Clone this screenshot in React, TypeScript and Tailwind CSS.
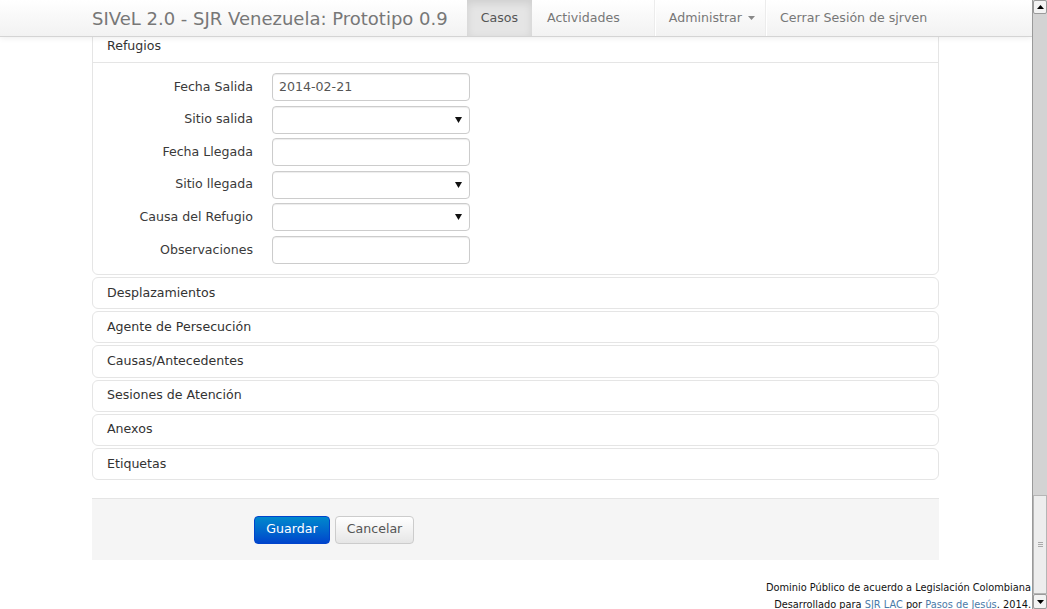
import React from "react";

const font = { fontFamily: '"DejaVu Sans", sans-serif' };

function Field({ label, value, select }: { label: string; value?: string; select?: boolean }) {
  return (
    <div className="flex items-center h-[28px]">
      <div className="w-[160px] text-right text-[12.6px] text-[#3a3a3a]">{label}</div>
      <div className="ml-[19px] w-[198px] h-[28px] border border-[#cccccc] rounded-[4px] bg-white flex items-center px-[6px] text-[12.6px] text-[#555] shadow-[inset_0_1px_1px_rgba(0,0,0,0.075)]">
        <span className="flex-1">{value}</span>
        {select && (
          <svg width="7" height="6" viewBox="0 0 7 6" className="mr-[1px]">
            <path d="M0 0 L7 0 L3.5 6 Z" fill="#111" />
          </svg>
        )}
      </div>
    </div>
  );
}

function Item({ title }: { title: string }) {
  return (
    <div className="h-[32.2px] border border-[#e5e5e5] rounded-[6px] flex items-center pl-[14px] text-[12.6px] text-[#333]">
      {title}
    </div>
  );
}

export default function App() {
  return (
    <div className="w-[1047px] h-[609px] overflow-hidden flex bg-white" style={font}>
      <div className="relative flex-1 h-full overflow-hidden">
        <div className="absolute top-0 left-0 right-0 h-[37px] z-10 bg-gradient-to-b from-white to-[#f2f2f2] border-b border-[#d4d4d4] shadow-[0_1px_6px_rgba(0,0,0,0.08)] flex">
          <div className="ml-[92px] flex items-center h-full text-[18px] text-[#777] pr-[19px]">
            SIVeL 2.0 - SJR Venezuela: Prototipo 0.9
          </div>
          <div className="flex h-full text-[12.6px] text-[#777]">
            <div className="px-[14px] flex items-center bg-[#e5e5e5] text-[#555] shadow-[inset_0_3px_8px_rgba(0,0,0,0.1)]">Casos</div>
            <div className="px-[15px] flex items-center">Actividades</div>
            <div className="ml-[19px] h-full border-l border-[#ececec] border-r border-r-white" />
            <div className="pl-[13px] pr-[10px] flex items-center gap-[6px]">
              Administrar
              <svg width="7" height="4" viewBox="0 0 7 4"><path d="M0 0 L7 0 L3.5 4 Z" fill="#888" /></svg>
            </div>
            <div className="h-full border-l border-[#ececec] border-r border-r-white" />
            <div className="px-[13px] flex items-center">Cerrar Sesión de sjrven</div>
          </div>
        </div>

        <div className="pt-[29px] ml-[92px] w-[847px]">
          <div className="border border-[#e5e5e5] rounded-[6px]">
            <div className="h-[33px] border-b border-[#e5e5e5] flex items-center pl-[14px] text-[12.6px] text-[#333]">Refugios</div>
            <div className="pt-[10px] pb-[10px] flex flex-col gap-[4.6px]">
              <Field label="Fecha Salida" value="2014-02-21" />
              <Field label="Sitio salida" select />
              <Field label="Fecha Llegada" />
              <Field label="Sitio llegada" select />
              <Field label="Causa del Refugio" select />
              <Field label="Observaciones" />
            </div>
          </div>
          <div className="mt-[2px] flex flex-col gap-[2px]">
            <Item title="Desplazamientos" />
            <Item title="Agente de Persecución" />
            <Item title="Causas/Antecedentes" />
            <Item title="Sesiones de Atención" />
            <Item title="Anexos" />
            <Item title="Etiquetas" />
          </div>
          <div className="mt-[18px] h-[62px] border-t border-[#e5e5e5] bg-[#f5f5f5] flex items-center pl-[162px] gap-[5px]">
            <button className="w-[76px] h-[28px] rounded-[4px] border border-[#0044cc] bg-gradient-to-b from-[#0088cc] to-[#0044cc] text-white text-[12.6px]">Guardar</button>
            <button className="w-[79px] h-[28px] rounded-[4px] border border-[#cccccc] bg-gradient-to-b from-white to-[#e6e6e6] text-[#555] text-[12.6px]">Cancelar</button>
          </div>
        </div>
        <div className="mt-[19px] pr-[1px] text-right text-[9.8px] leading-[17px] text-[#111]">
          <div>Dominio Público de acuerdo a Legislación Colombiana</div>
          <div>
            Desarrollado para <span className="text-[#4a7aa8]">SJR LAC</span> por <span className="text-[#4a7aa8]">Pasos de Jesús</span>. 2014.
          </div>
        </div>
      </div>
      <div className="w-[15px] h-full flex flex-col bg-[#d3d3d3] border-l border-[#9a9a9a]">
        <div className="h-[14px] bg-[#f3f3f3] border border-[#9a9a9a] rounded-[2px] flex items-center justify-center">
          <svg width="7" height="4" viewBox="0 0 7 4"><path d="M0 4 L7 4 L3.5 0 Z" fill="#000" /></svg>
        </div>
        <div className="flex-1 flex flex-col justify-end">
          <div className="h-[99px] bg-[#ededed] border border-[#b5b5b5] flex items-center justify-center">
            <div className="flex flex-col gap-[1px]">
              <div className="w-[5px] h-px bg-[#aaa]" />
              <div className="w-[5px] h-px bg-[#aaa]" />
              <div className="w-[5px] h-px bg-[#aaa]" />
            </div>
          </div>
        </div>
        <div className="h-[15px] bg-[#f3f3f3] border border-[#9a9a9a] rounded-[2px] flex items-center justify-center">
          <svg width="7" height="4" viewBox="0 0 7 4"><path d="M0 0 L7 0 L3.5 4 Z" fill="#000" /></svg>
        </div>
      </div>
    </div>
  );
}
